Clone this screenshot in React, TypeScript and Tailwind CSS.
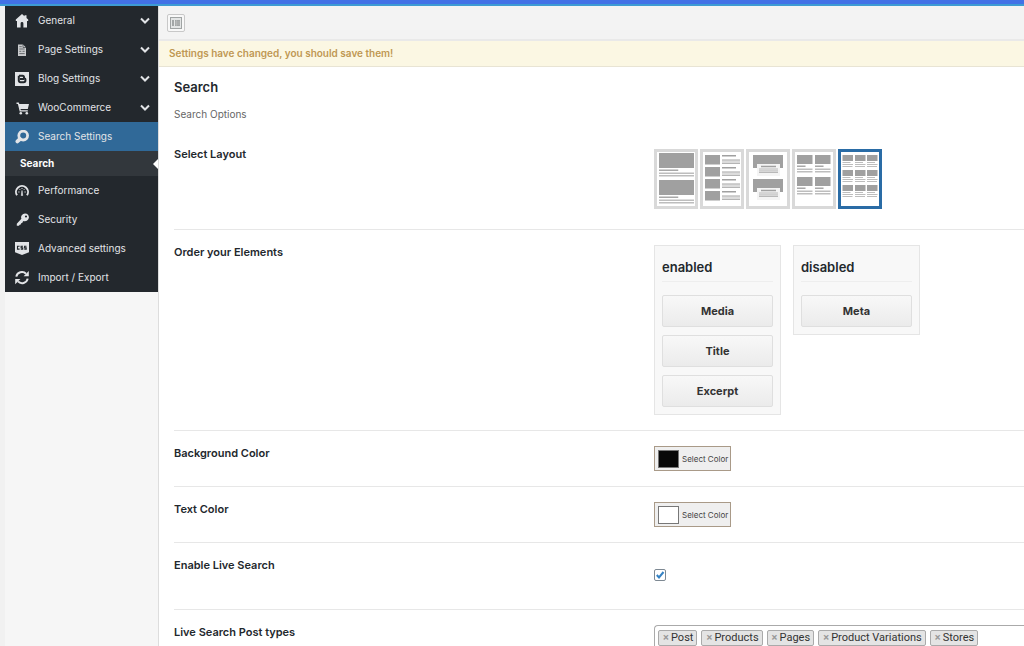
import { useState, type ReactNode } from "react";

const icons: Record<string, ReactNode> = {
  home: <path fill="currentColor" d="M7 0 .8 5.6V7H2v6.500h3.600V9.500a1.400 1.400 0 0 1 2.800 0v4H12V7h1.200V5.600L11.500 4V1.200H9.500v1z" />,
  page: (
    <>
      <path fill="#c9cbcd" d="M3 1.500h5l3 3V13H3z" />
      <path stroke="#23282d" strokeWidth="0.6" fill="none" d="M8 1.500v3h3M4.300 3.700h2.500M4.300 6h5.400M4.300 8.300h2M7.500 8.300h2.200M4.300 10.600h5.400" />
    </>
  ),
  blog: (
    <>
      <path fill="currentColor" d="M0 0h14v14H0z" />
      <path fill="none" stroke="#23282d" strokeWidth="2" strokeLinejoin="round" d="M4 3.700h3.500a1.500 1.500 0 0 1 1.500 1.500v1.200h.6a.8.8 0 0 1 .8.8v1.300a1.800 1.800 0 0 1-1.800 1.800H5.500A1.700 1.700 0 0 1 3.800 8.600V3.700M5 6.900h4" />
    </>
  ),
  cart: (
    <>
      <path fill="currentColor" d="M1.500 1.500h2.300l.5 1.600H14l-1.200 5H5.500l.3 1.100h7v1.200H4.700L2.900 2.900H1.500z" />
      <circle cx="5.800" cy="12.300" r="1.300" fill="currentColor" />
      <circle cx="11.800" cy="12.300" r="1.300" fill="currentColor" />
    </>
  ),
  search: (
    <>
      <circle cx="8.200" cy="5.600" r="4.400" fill="none" stroke="currentColor" strokeWidth="2.800" />
      <path d="M5 9 2.400 11.400" stroke="currentColor" strokeWidth="3.800" strokeLinecap="round" />
    </>
  ),
  gauge: (
    <>
      <path d="M2 11.300A6 6 0 1 1 12 11.300" fill="none" stroke="currentColor" strokeWidth="1.900" />
      <path d="M6.300 11.500 7 6.500l.7 5z" fill="currentColor" stroke="currentColor" strokeWidth="0.600" />
      <path d="M3.300 8h1.200M9.500 8h1.200M4.600 5.200l.7.8M9.400 5.200l-.7.800M7 4v1" stroke="currentColor" strokeWidth="1" />
    </>
  ),
  key: (
    <path
      fillRule="evenodd"
      fill="currentColor"
      d="M10 .4a3.900 3.900 0 1 1-1.500 7.500L7.600 8.900l-.3 1.200-1.200.2-.3 1.200-1.200.2-.6 1H1.800v-2L6.400 5.800A3.900 3.900 0 0 1 10 .4zm1 2a1.100 1.100 0 1 0 0 2.200 1.100 1.100 0 0 0 0-2.200z"
    />
  ),
  css: (
    <>
      <path fill="currentColor" d="M0 0h14v10.300l-7 2.700-7-2.700z" />
      <path d="M4.600 4.300H2.500v2.800h2.100M8 4.300H6.100v1.400h1.600v1.400H5.800M11.500 4.300H9.600v1.400h1.600v1.400H9.300" fill="none" stroke="#23282d" strokeWidth="1.100" />
    </>
  ),
  sync: (
    <>
      <path d="M1.300 5.600A5.700 5.700 0 0 1 11 2.800M12.700 7.600A5.700 5.700 0 0 1 3 10.400" fill="none" stroke="currentColor" strokeWidth="2" />
      <path d="M13.800 0v5.200H8.600zM.2 13.200V8h5.200z" fill="currentColor" />
    </>
  ),
};

function Icon({ name }: { name: string }) {
  return (
    <svg viewBox="0 0 14 14" className="size-3.5 shrink-0" aria-hidden="true">
      {icons[name]}
    </svg>
  );
}

type NavItem = { icon: string; label: string; expandable?: boolean };

const upperNav: NavItem[] = [
  { icon: "home", label: "General", expandable: true },
  { icon: "page", label: "Page Settings", expandable: true },
  { icon: "blog", label: "Blog Settings", expandable: true },
  { icon: "cart", label: "WooCommerce", expandable: true },
];

const lowerNav: NavItem[] = [
  { icon: "gauge", label: "Performance" },
  { icon: "key", label: "Security" },
  { icon: "css", label: "Advanced settings" },
  { icon: "sync", label: "Import / Export" },
];

function NavLink({ item }: { item: NavItem }) {
  return (
    <a href="#" className="flex h-[29px] items-center gap-[9px] pr-2 pl-2.5 text-[#e2e4e7]">
      <Icon name={item.icon} />
      <span className="flex-1">{item.label}</span>
      {item.expandable && (
        <svg viewBox="0 0 10 8" className="h-2 w-2.5" aria-hidden="true">
          <path d="m1 1.500 4 4 4-4" fill="none" stroke="currentColor" strokeWidth="2" />
        </svg>
      )}
    </a>
  );
}

const grey = "#a0a0a0";

function Lines({ x, y, w }: { x: number; y: number; w: number }) {
  return (
    <>
      <rect x={x} y={y} width={w * 0.55} height="1.500" fill="#a8a8a8" />
      <rect x={x} y={y + 3} width={w} height="1.500" fill="#bdbdbd" />
      <rect x={x} y={y + 5.500} width={w} height="1.500" fill="#bdbdbd" />
    </>
  );
}

const layouts: { name: string; art: ReactNode }[] = [
  {
    name: "Large images",
    art: [4, 31].map((y) => (
      <g key={y}>
        <rect x="5" y={y} width="35" height="15" fill={grey} />
        <Lines x={5} y={y + 16.500} w={35} />
      </g>
    )),
  },
  {
    name: "Side images",
    art: [6, 18, 30, 42].map((y) => (
      <g key={y}>
        <rect x="5" y={y} width="15" height="9.500" fill={grey} />
        <rect x="22" y={y} width="14" height="1.500" fill={grey} />
        <rect x="22" y={y + 4.500} width="18" height="4.500" fill="#dcdcdc" />
        <path d={`M22 ${y + 5}h18M22 ${y + 8.500}h18`} stroke="#b5b5b5" />
      </g>
    )),
  },
  {
    name: "Overlay",
    art: [6, 30].map((y) => (
      <g key={y}>
        <rect x="7" y={y} width="30" height="13" fill={grey} />
        <rect x="11" y={y + 9} width="23" height="12" fill="#f4f4f4" />
        <path d={`M15 ${y + 11.500}h15`} stroke={grey} strokeWidth="1.500" />
        <path d={`M13 ${y + 14}h19M13 ${y + 17.500}h19`} stroke="#b8b8b8" />
        <path d={`M13 ${y + 15.800}h19`} stroke="#d0d0d0" strokeWidth="2" />
      </g>
    )),
  },
  {
    name: "Two columns",
    art: [6, 28].flatMap((y) =>
      [5, 23].map((x) => (
        <g key={`${x}-${y}`}>
          <rect x={x} y={y} width="15.500" height="9" fill={grey} />
          <Lines x={x} y={y + 10.500} w={15.500} />
        </g>
      )),
    ),
  },
  {
    name: "Three columns",
    art: [6, 21, 36].flatMap((y) =>
      [4.500, 17, 29].map((x) => (
        <g key={`${x}-${y}`}>
          <rect x={x} y={y} width="10.500" height="6" fill={grey} />
          <path d={`M${x} ${y + 7.500}h8M${x} ${y + 9.500}h10.500M${x} ${y + 11.500}h10`} stroke="#bdbdbd" />
        </g>
      )),
    ),
  },
];

function Row({ label, children, first }: { label: ReactNode; children: ReactNode; first?: boolean }) {
  return (
    <div className={`grid grid-cols-[480px_minmax(0,1fr)] border-b border-[#e7e7e7] ${first ? "pt-3 pb-5" : "py-[15px]"}`}>
      <div className="-mt-px text-[11px] leading-4 font-semibold text-[#23282d]">{label}</div>
      {children}
    </div>
  );
}

function Sorter({ title, items }: { title: string; items: string[] }) {
  return (
    <section className="flex w-[127px] flex-col border border-[#e5e5e5] bg-[#f8f8f8] px-[7px] pt-[11px] pb-[7px]">
      <h3 className="mb-[13px] border-b border-[#eeeeee] pb-1 text-[13px] leading-5 font-semibold text-[#23282d]">{title}</h3>
      <ul className="flex flex-col gap-2">
        {items.map((item) => (
          <li
            key={item}
            className="flex h-8 cursor-move items-center justify-center rounded-xs border border-[#dfdfdf] bg-linear-to-b from-[#f8f8f8] to-[#ebebeb] text-[11px] font-bold text-[#333333]"
          >
            {item}
          </li>
        ))}
      </ul>
    </section>
  );
}

function ColorButton({ swatch }: { swatch: string }) {
  return (
    <button
      type="button"
      className="flex h-[25px] w-[77px] items-center gap-[3px] justify-self-start border border-[#a99a88] bg-[#efefef] pl-[3px] text-[8px] whitespace-nowrap text-[#444444]"
    >
      <span className={`h-[18px] w-[21px] shrink-0 border border-[#777777] ${swatch}`} />
      Select Color
    </button>
  );
}

export default function App() {
  const [layout, setLayout] = useState("Three columns");
  const [live, setLive] = useState(true);
  const [types, setTypes] = useState(["Post", "Products", "Pages", "Product Variations", "Stores"]);

  return (
    <div className="flex h-screen flex-col overflow-hidden bg-[#f1f1f1] font-['Inter','Liberation_Sans',sans-serif] text-[10px] text-[#23282d]">
      <div className="h-1.5 shrink-0 border-b-2 border-[#3d9bd3] bg-[#4271e6]" />
      <div className="flex min-h-0 flex-1 pl-[5px]">
        <aside className="w-[153px] shrink-0 bg-[#f6f6f6]">
          <nav className="bg-[#23282d]">
            {upperNav.map((item) => (
              <NavLink key={item.label} item={item} />
            ))}
            <div className="bg-[#306998]">
              <NavLink item={{ icon: "search", label: "Search Settings" }} />
            </div>
            <a href="#" className="flex h-[25px] items-center justify-between bg-[#32373c] pl-[15px] font-bold text-white">
              Search
              <svg viewBox="0 0 5 10" className="h-2.5 w-[5px]" aria-hidden="true">
                <path d="M5 0 0 5l5 5z" fill="currentColor" />
              </svg>
            </a>
            {lowerNav.map((item) => (
              <NavLink key={item.label} item={item} />
            ))}
          </nav>
        </aside>

        <main className="min-w-0 flex-1 border-l border-[#dddddd] bg-white">
          <div className="flex h-[35px] items-center border-b-2 border-[#e9e9e9] bg-[#f3f3f3] pl-2">
            <button type="button" aria-label="Expand options" className="flex size-[18px] items-center justify-center rounded-xs border border-[#c8c8c8] bg-[#f8f8f8]">
              <svg viewBox="0 0 12 12" className="size-3" aria-hidden="true">
                <rect x="0.500" y="0.500" width="11" height="11" fill="#e3e5e5" stroke="#a0a4a4" />
                <path fill="#a2a6a6" d="M2 3h2v6H2zM5 3h5v6H5z" />
                <path stroke="#c0c3c3" strokeWidth="0.500" d="M6.500 3v6M5 5h5M5 7h5" />
              </svg>
            </button>
          </div>
          <p className="border-b border-[#e8e4d4] bg-[#fbf7e3] pl-2.5 text-[10px] leading-[25px] font-semibold text-[#bf9853]">
            Settings have changed, you should save them!
          </p>

          <div className="pt-3 pl-[15px]">
            <h2 className="text-[13px] leading-4 font-semibold text-[#23282d]">Search</h2>
            <p className="mt-3 text-[10px] leading-3.5 text-[#666666]">Search Options</p>

            <div className="mt-3.5">
              <Row label="Select Layout" first>
                <div role="radiogroup" aria-label="Select Layout" className="flex gap-0.5 pt-0.5">
                  {layouts.map(({ name, art }) => (
                    <label key={name} className="relative h-[60px] w-11 shrink-0 cursor-pointer">
                      <input type="radio" name="layout" aria-label={name} checked={layout === name} onChange={() => setLayout(name)} className="sr-only" />
                      <svg viewBox="0 0 44 60" className={`h-[60px] w-11 bg-white ${layout === name ? "text-[#2a6ca6]" : "text-[#d9d9d9]"}`} aria-hidden="true">
                        {art}
                        <rect x="1.500" y="1.500" width="41" height="57" fill="none" stroke="currentColor" strokeWidth="3" />
                      </svg>
                    </label>
                  ))}
                </div>
              </Row>

              <Row label="Order your Elements">
                <div className="flex items-start gap-3">
                  <Sorter title="enabled" items={["Media", "Title", "Excerpt"]} />
                  <Sorter title="disabled" items={["Meta"]} />
                </div>
              </Row>

              <Row label="Background Color">
                <ColorButton swatch="bg-[#080808]" />
              </Row>

              <Row label="Text Color">
                <ColorButton swatch="bg-white" />
              </Row>

              <Row label={<label htmlFor="live-search">Enable Live Search</label>}>
                <div className="flex h-9 items-center pb-0.5">
                  <span className="grid size-3">
                    <input
                      id="live-search"
                      type="checkbox"
                      checked={live}
                      onChange={(e) => setLive(e.target.checked)}
                      className="col-start-1 row-start-1 size-3 appearance-none rounded-xs border border-[#7e8993] bg-white"
                    />
                    {live && (
                      <svg viewBox="0 0 12 12" className="pointer-events-none col-start-1 row-start-1 size-3" aria-hidden="true">
                        <path d="m2.800 6 2.200 2.500 4.500-5.500" fill="none" stroke="#3582c4" strokeWidth="2" />
                      </svg>
                    )}
                  </span>
                </div>
              </Row>

              <Row label="Live Search Post types">
                <ul className="flex items-start gap-1 rounded-l-sm border border-r-0 border-[#aaaaaa] p-1 pl-[3px] font-['Roboto','Liberation_Sans',sans-serif]">
                  {types.map((type) => (
                    <li key={type} className="flex h-4 items-center rounded-xs border border-[#aaaaaa] bg-[#e4e4e4] pr-[3px] pl-1 text-[11px] whitespace-nowrap text-[#333333]">
                      <button type="button" aria-label={`Remove ${type}`} onClick={() => setTypes(types.filter((t) => t !== type))} className="w-2 text-left text-[11px] font-bold text-[#999999]">
                        ×
                      </button>
                      {type}
                    </li>
                  ))}
                </ul>
              </Row>
            </div>
          </div>
        </main>
      </div>
    </div>
  );
}
